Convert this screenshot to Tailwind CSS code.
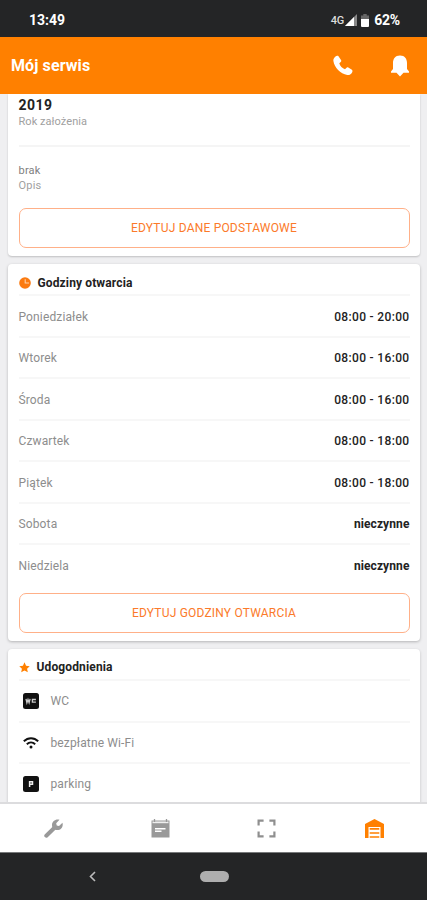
<!DOCTYPE html>
<html lang="pl">
<head>
<meta charset="utf-8">
<meta name="viewport" content="width=device-width, initial-scale=1">
<title>Mój serwis</title>
<script src="https://cdn.jsdelivr.net/npm/@tailwindcss/browser@4"></script>
</head>
<body class="bg-[#efeff1]">
<div class="flex h-[900px] w-[427px] flex-col overflow-hidden font-[Roboto,sans-serif] text-[#222]">

  <!-- Status bar -->
  <div class="flex h-[37px] shrink-0 items-center justify-between bg-[#242526] pt-[3px] pr-[27px] pl-[29px] text-white">
    <span class="text-[14px] font-bold">13:49</span>
    <div class="flex items-center">
      <span class="text-[11px] leading-none font-medium tracking-[-0.2px] text-[#ddd]">4G</span>
      <svg class="ml-px h-3 w-3" viewBox="0 0 12 12"><path d="M12 0V12H0Z" fill="#888"/><path d="M9 3V12H0Z" fill="#fff"/></svg>
      <svg class="ml-[4px] h-[13px] w-2" viewBox="0 0 8 13"><path d="M2.300 0h3.400v1.500H8V5H0V1.500h2.300z" fill="#666"/><path d="M0 5h8V12a1 1 0 0 1-1 1H1a1 1 0 0 1-1-1z" fill="#fff"/></svg>
      <span class="ml-[5px] text-[14px] font-bold tracking-[-0.2px]">62%</span>
    </div>
  </div>

  <!-- App header -->
  <header class="flex h-[57px] shrink-0 items-center justify-between bg-[#ff8000] pr-[18px] pl-[11px] text-white">
    <h1 class="text-[16px] font-bold tracking-[0.1px]">Mój serwis</h1>
    <div class="flex items-center gap-[38px]">
      <svg class="h-[21px] w-[20px]" viewBox="0 0 20 21" fill="#fff"><path d="M2.200 1.800C3.200.700 4.800.300 5.500 1.200L8 5C8.500 5.900 8.300 6.500 7.700 7L6.300 8.300C7 11 9.300 13.300 12 14.300L13.300 12.900C13.900 12.300 14.600 12.200 15.300 12.600L18.900 14.800C19.900 15.500 19.600 17 18.600 18.300C17.500 19.800 16.100 20.300 14.300 20C7.300 18.900 1.400 12.700.400 6C.150 4.300.900 3.100 2.200 1.800z"/></svg>
      <svg class="h-[22px] w-[18px]" viewBox="0 0 18 22" fill="#fff"><path d="M9 .5C13.800.5 16 4 16 8v6l2 2.500v1.200h-5.500L9 21.500 5.500 17.700H0v-1.200L2 14V8C2 4 4.200.5 9 .5z"/></svg>
    </div>
  </header>

  <!-- Scrolled content -->
  <main class="flex min-h-0 flex-1 flex-col gap-2 overflow-hidden pr-[7px] pl-2 text-[12px] *:shrink-0">
    <section class="flex h-[162px] flex-col rounded-b-[4px] bg-white px-[10.5px] shadow-[0_1px_2px_rgba(0,0,0,0.2)]">
      <div class="flex h-[53px] flex-col border-b-2 border-[#f5f5f5] pt-[3px]">
        <strong class="text-[14px] leading-[17px] font-bold tracking-[0.5px]">2019</strong>
        <span class="text-[11px] leading-[16px] tracking-[0.05px] text-[#a0a0a0]">Rok założenia</span>
      </div>
      <div class="flex h-[61px] flex-col pt-[16px] text-[11px] leading-[15px] tracking-[0.2px]">
        <span class="text-[#808080]">brak</span>
        <span class="text-[#a0a0a0]">Opis</span>
      </div>
      <button class="h-10 rounded-[7px] border-[1.5px] border-[#ffb088] text-[12px] tracking-[0.2px] text-[#fb7a2a]">EDYTUJ DANE PODSTAWOWE</button>
    </section>

    <section class="flex h-[376.5px] flex-col rounded-[4px] bg-white px-[10.5px] shadow-[0_1px_3px_rgba(0,0,0,0.25)]">
      <div class="flex h-[32px] items-center border-b-2 border-[#f7f7f7] pt-[7px]">
        <svg class="h-3 w-3" viewBox="0 0 12 12"><circle cx="6" cy="6" r="5.800" fill="#fb7a10"/><path d="M6.200 2.200V6H10" fill="none" stroke="#ffd2a8" stroke-width="1.100"/></svg>
        <h2 class="ml-[7px] text-[12px] font-bold tracking-[0.13px]">Godziny otwarcia</h2>
      </div>
      <dl class="flex flex-col *:flex *:h-[41.5px] *:items-center *:justify-between *:border-b-2 *:border-[#f7f7f7] *:pt-[2px]">
        <div><dt class="tracking-[0.13px] text-[#8d8d8d]">Poniedziałek</dt><dd class="font-medium tracking-[0.34px]">08:00 - 20:00</dd></div>
        <div><dt class="tracking-[0.13px] text-[#8d8d8d]">Wtorek</dt><dd class="font-medium tracking-[0.34px]">08:00 - 16:00</dd></div>
        <div><dt class="tracking-[0.13px] text-[#8d8d8d]">Środa</dt><dd class="font-medium tracking-[0.34px]">08:00 - 16:00</dd></div>
        <div><dt class="tracking-[0.13px] text-[#8d8d8d]">Czwartek</dt><dd class="font-medium tracking-[0.34px]">08:00 - 18:00</dd></div>
        <div><dt class="tracking-[0.13px] text-[#8d8d8d]">Piątek</dt><dd class="font-medium tracking-[0.34px]">08:00 - 18:00</dd></div>
        <div><dt class="tracking-[0.13px] text-[#8d8d8d]">Sobota</dt><dd class="font-bold tracking-[0.1px]">nieczynne</dd></div>
        <div class="border-transparent!"><dt class="tracking-[0.13px] text-[#8d8d8d]">Niedziela</dt><dd class="font-bold tracking-[0.1px]">nieczynne</dd></div>
      </dl>
      <button class="mt-[6.500px] h-10 rounded-[7px] border-[1.5px] border-[#ffb088] text-[12px] tracking-[0.2px] text-[#fb7a2a]">EDYTUJ GODZINY OTWARCIA</button>
    </section>

    <section class="flex h-[200px] flex-col rounded-[4px] bg-white px-[10.5px] shadow-[0_1px_3px_rgba(0,0,0,0.2)]">
      <div class="flex h-[32.500px] items-center border-b-2 border-[#f7f7f7] pt-[7px]">
        <svg class="h-[11px] w-[11px]" viewBox="0 0 12 12" fill="#ff8000"><path d="M6 .3l1.700 3.700 4 .5-2.900 2.800.8 4L6 9.300l-3.600 2 .8-4L.3 4.500l4-.5z"/></svg>
        <h2 class="ml-[7px] text-[12px] font-bold tracking-[0.13px]">Udogodnienia</h2>
      </div>
      <ul class="flex flex-col text-[#8d8d8d] *:flex *:h-[41.5px] *:items-center *:gap-3 *:border-b-2 *:border-[#f7f7f7] *:pt-px *:pl-1">
        <li>
          <svg class="h-4 w-4" viewBox="0 0 16 16"><rect width="16" height="16" rx="2.500" fill="#111"/><path d="M3 5.900l.9 3.900 1.100-3.300 1.100 3.300 1-3.900M12.900 6.500H9.400v2.700h3.500" fill="none" stroke="#ccc" stroke-width="1.300"/></svg>
          <span>WC</span>
        </li>
        <li>
          <svg class="h-4 w-4" viewBox="0 0 16 16" fill="none" stroke="#111" stroke-width="1.900"><path d="M.8 6.300c4.200-4.100 10.200-4.100 14.400 0M3.800 9.300c2.500-2.400 5.900-2.400 8.400 0"/><circle cx="8" cy="12" r="1.500" fill="#111" stroke="none"/></svg>
          <span class="tracking-[0.13px]">bezpłatne Wi-Fi</span>
        </li>
        <li>
          <svg class="h-4 w-4" viewBox="0 0 16 16"><rect width="16" height="16" rx="2.500" fill="#111"/><path d="M6.600 11V5.800h2.900v2.400H7" fill="none" stroke="#eee" stroke-width="1.500"/></svg>
          <span class="tracking-[0.13px]">parking</span>
        </li>
      </ul>
    </section>
  </main>

  <!-- Tab bar -->
  <nav class="z-10 grid h-[50px] shrink-0 grid-cols-4 items-center justify-items-center border-t-2 border-[#dcdcde] bg-white">
    <svg class="ml-px h-[19px] w-[19px]" viewBox="0 0 19 19"><path d="M2.300 16.700L11 8.300" stroke="#999" stroke-width="4" stroke-linecap="round"/><path d="M15.500.8l-3.300 3.400.5 2.300 2.300.5 3.500-3.300c1 4-1.500 7.300-5 7.300C9.500 11 8 8.800 8 6 8 2.300 11.700-.4 15.500.8z" fill="#999"/></svg>
    <svg class="h-[19px] w-[19px]" viewBox="0 0 19 19"><path d="M.5 1.500h18v17H.5z" fill="#999"/><path d="M1.500 2.500h16v1.700h-16z" fill="#eee"/><path d="M3.500 0v3M15.500 0v3" stroke="#999" stroke-width="1.300"/><path d="M4 9.800h10.500M4 12.300h6.500" stroke="#fff" stroke-width="1.500"/></svg>
    <svg class="h-[19px] w-[19px]" viewBox="0 0 19 19" fill="none" stroke="#8f8f8f" stroke-width="2.200"><path d="M1.600 6.500V1.600h5M12.400 1.600h5v4.900M17.400 12.500v4.900h-5M6.600 17.400h-5v-4.900"/></svg>
    <svg class="ml-px h-[19px] w-[19px]" viewBox="0 0 19 19"><path d="M9.500 0L19 5v14h-3.500V8h-12v11H0V5z" fill="#ff8000"/><path d="M4.700 9.900h9.600M4.700 14h9.600M4.700 18h9.600" stroke="#ff8000" stroke-width="1.700"/></svg>
  </nav>

  <!-- System navigation -->
  <div class="grid h-[48px] shrink-0 grid-cols-[185px_58px_1fr] items-center justify-items-center border-t border-[#77797a] bg-[#242526] pb-px">
    <svg class="h-[11px] w-[7px]" viewBox="0 0 7 11" fill="none" stroke="#bbb" stroke-width="1.600"><path d="M6 1L1.500 5.500 6 10"/></svg>
    <div class="h-[11px] w-[29px] rounded-full bg-[#aeaeae]"></div>
  </div>
</div>
</body>
</html>
